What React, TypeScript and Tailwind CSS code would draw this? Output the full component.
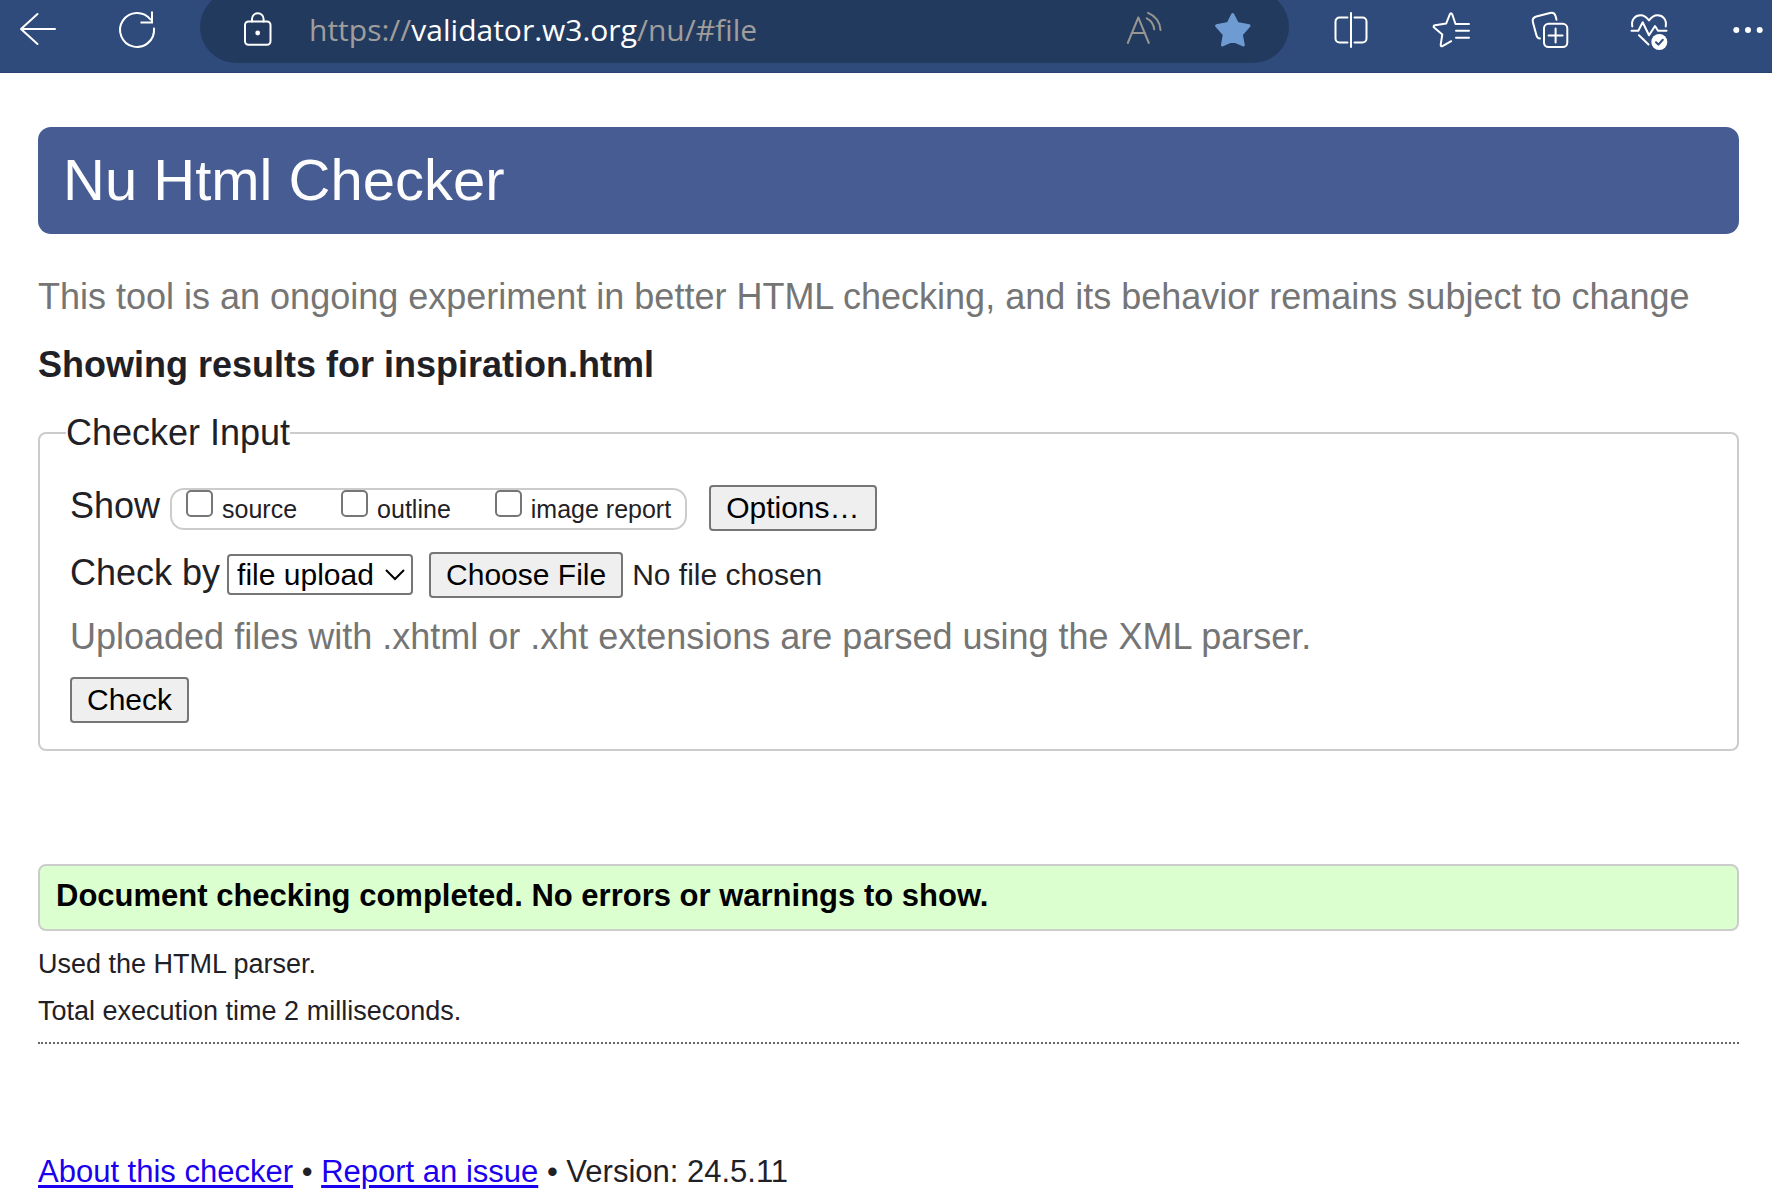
import React from "react";

type IconProps = { children: React.ReactNode; color?: string };

function Icon({ children, color = "#ffffff" }: IconProps) {
  return (
    <svg
      className="block size-9 overflow-visible"
      viewBox="0 0 36 36"
      fill="none"
      stroke={color}
      strokeWidth="2"
      strokeLinecap="round"
      strokeLinejoin="round"
      aria-hidden="true"
    >
      {children}
    </svg>
  );
}

function IconButton({ label, children, color }: IconProps & { label: string }) {
  return (
    <button type="button" aria-label={label} className="shrink-0">
      <Icon color={color}>{children}</Icon>
    </button>
  );
}

function BrowserBar() {
  return (
    <header className="flex h-[73px] items-start overflow-hidden border-b border-[#28436f] bg-[#2f4b7b]">
      <div className="mr-[45px] ml-5 flex gap-[63px] pt-[11px]">
        <IconButton label="Back">
          <path d="M17.500 3 1 18l16.500 15M1 18h34" />
        </IconButton>
        <IconButton label="Refresh">
          <path d="M35 17.500A17 17 0 1 1 31.500 8.500" />
          <path d="M33 1.500v10H22.500" strokeLinecap="square" strokeLinejoin="miter" />
        </IconButton>
      </div>
      <div className="-mt-[9px] flex h-[72px] min-w-0 flex-1 items-center rounded-full bg-[#233a5f] pt-1 pr-[38px] pl-10">
        <IconButton label="View site information">
          <rect x="5" y="10.500" width="25.500" height="23.300" rx="3.500" />
          <path d="M12 10.500V8a5.800 5.800 0 0 1 11.600 0v2.500" />
          <circle cx="17.700" cy="22" r="2.400" fill="#ffffff" stroke="none" />
        </IconButton>
        <div className="ml-[33px] min-w-0 flex-1 truncate font-['Open_Sans','Noto_Sans',sans-serif] text-[30px] text-[#a09e9c]">
          https://<span className="text-white">validator.w3.org</span>/nu/#file
        </div>
        <div className="flex gap-[53px]">
          <IconButton label="Read aloud" color="#96958f">
            <path d="M1.800 32 12.300 6.500 22.800 32M5.500 22h13.600" />
            <path d="M20.700 7.300c4.300 2.200 7.100 6.200 7.500 11M22 1.900c7.500 3.100 12 9.600 12.500 17.100" />
          </IconButton>
          <IconButton label="Edit favorite" color="#6f9bd3">
            <path
              d="M17.700 3.500 22.200 12.500 34 14.800 26.300 23.500 28.300 34 17.700 29.300 7.500 34 9.300 23.500 1.600 14.800 13.200 12.500Z"
              fill="#6f9bd3"
              strokeWidth="3"
            />
          </IconButton>
        </div>
      </div>
      <div className="mr-[7px] ml-11 flex gap-[63px] pt-[11px]">
        <IconButton label="Split screen">
          <path d="M14.500 6.500h-8a4 4 0 0 0-4 4v17a4 4 0 0 0 4 4h8M18 2v34M21.500 6.500h8a4 4 0 0 1 4 4v17a4 4 0 0 1-4 4h-8" />
        </IconButton>
        <IconButton label="Favorites">
          <path d="M37 13H23.500L20.200 3.300c-.6-1.300-1.800-1.300-2.400 0L14.200 12.500 3 14.300c-1.600.3-1.800 1.400-.9 2.300L10.300 23.500 8.700 33.700c-.1 1.400.7 1.900 1.800 1.400l8.700-4.900M24 19.800h13M24 26.800h13" />
        </IconButton>
        <IconButton label="Collections">
          <rect x="13" y="12.800" width="23.300" height="23.300" rx="4.500" />
          <path d="M24.600 17.500v14M17.600 24.500h14M25.500 8.700 24.700 5.500C23.900 2.600 21.800 1.300 19 2L5.300 5.500C2.500 6.300 1.200 8.500 1.900 11.300L5.500 24.500c.5 1.900 1.700 2.900 3.500 3" />
        </IconButton>
        <IconButton label="Browser essentials">
          <path d="M2.300 15.500C1 8.500 5 4.300 10.500 4.300c3.500 0 6.200 1.900 8.500 5.200 2.300-3.300 5-5.200 8.500-5.200 5.500 0 9.500 4.200 8.200 11.200" />
          <path d="M1.500 19.700h6.800l4.400-8.500L19 24.300l6-9.300 3 4.700h8.500M9 24.300l9.500 9.200" />
          <circle cx="29.300" cy="31" r="8" fill="#ffffff" stroke="none" />
          <path d="m26 31.200 2.400 2.400 4.400-4.800" stroke="#2f4b7b" />
        </IconButton>
        <IconButton label="Settings and more">
          <g fill="#ffffff" stroke="none">
            <circle cx="7.300" cy="19" r="3" />
            <circle cx="19" cy="19" r="3" />
            <circle cx="30.700" cy="19" r="3" />
          </g>
        </IconButton>
      </div>
    </header>
  );
}

function ShowOption({ id, label }: { id: string; label: string }) {
  return (
    <div className="flex items-baseline gap-[9px]">
      <input
        type="checkbox"
        id={id}
        className="size-[27px] shrink-0 appearance-none self-start rounded-[5px] border-2 border-[#767676] bg-white checked:bg-[#0075ff]"
      />
      <label htmlFor={id} className="text-[25px] leading-[38px]">
        {label}
      </label>
    </div>
  );
}

const buttonClass =
  "rounded-[4px] border-2 border-[#767676] bg-[#efefef] px-[15px] py-1 text-[30px] leading-[34px] text-black";

function CheckerForm() {
  return (
    <form onSubmit={(e) => e.preventDefault()}>
      <fieldset className="mt-6 rounded-lg border-2 border-[#cccccc] px-[26px] pb-[26px]">
        <legend className="text-4xl leading-[44px]">Checker Input</legend>
        <div className="pt-[30px] pl-1">
          <div className="flex flex-wrap items-baseline">
            <span className="mr-[10px] text-4xl leading-10">Show</span>
            <div
              role="group"
              aria-label="Show"
              className="mr-[22px] flex items-baseline gap-11 rounded-[14px] border-2 border-[#cccccc] px-[14px]"
            >
              <ShowOption id="source" label="source" />
              <ShowOption id="outline" label="outline" />
              <ShowOption id="imagereport" label="image report" />
            </div>
            <button type="button" className={buttonClass}>
              Options…
            </button>
          </div>
          <div className="mt-[21px] flex flex-wrap items-baseline">
            <label htmlFor="docselect" className="mr-[7px] text-4xl leading-10">
              Check by
            </label>
            <div className="relative mr-4">
              <select
                id="docselect"
                className="block h-[41px] appearance-none rounded-[4px] border-2 border-[#767676] bg-white pr-[37px] pl-2 text-[30px] leading-[37px] text-black"
              >
                <option>file upload</option>
              </select>
              <svg
                className="pointer-events-none absolute top-[15px] right-2 h-3 w-5"
                viewBox="0 0 20 12"
                fill="none"
                stroke="#000000"
                strokeWidth="2"
                aria-hidden="true"
              >
                <path d="m1 1 9 9 9-9" />
              </svg>
            </div>
            <input
              type="file"
              aria-label="File to check"
              className="w-[480px] text-[30px] leading-[34px] file:mr-[9px] file:rounded-[4px] file:border-2 file:border-solid file:border-[#767676] file:bg-[#efefef] file:px-[15px] file:py-1 file:text-[30px] file:leading-[34px] file:text-black"
            />
          </div>
          <p className="mt-[17px] text-4xl leading-[44px] text-[#757575]">
            Uploaded files with .xhtml or .xht extensions are parsed using the XML parser.
          </p>
          <button type="submit" className={`${buttonClass} mt-[18px] block`}>
            Check
          </button>
        </div>
      </fieldset>
    </form>
  );
}

export default function App() {
  return (
    <div className="min-h-screen bg-white font-['Liberation_Sans',Arial,sans-serif] text-[#1f2126]">
      <BrowserBar />
      <main className="pt-[54px] pr-[33px] pl-[38px]">
        <h1 className="rounded-[13px] bg-[#485c94] px-[25px] pt-[19px] pb-[21px] text-[58px] leading-[67px] text-[#fdfdfd]">
          Nu Html Checker
        </h1>
        <p className="mt-[41px] text-4xl leading-[44px] text-[#757575]">
          This tool is an ongoing experiment in better HTML checking, and its behavior remains subject to change
        </p>
        <h2 className="mt-6 text-4xl leading-[44px] font-bold">Showing results for inspiration.html</h2>
        <CheckerForm />
        <p className="mt-[113px] rounded-lg border-2 border-[#cccccc] bg-[#dcffcf] px-4 pt-3 pb-[15px] text-[31px] leading-9 font-bold text-black">
          Document checking completed. No errors or warnings to show.
        </p>
        <p className="mt-[17px] text-[27px] leading-8">Used the HTML parser.</p>
        <p className="mt-[15px] text-[27px] leading-8">Total execution time 2 milliseconds.</p>
        <hr className="mt-[15px] border-t-2 border-dotted border-[#666666]" />
      </main>
      <footer className="mt-[110px] pr-[33px] pl-[38px] text-[31px] leading-9">
        <a href="#about" className="text-[#1a00ee] underline decoration-[3px] underline-offset-[3px]">
          About this checker
        </a>{" "}
        •{" "}
        <a href="#issues" className="text-[#1a00ee] underline decoration-[3px] underline-offset-[3px]">
          Report an issue
        </a>{" "}
        • Version: 24.5.11
      </footer>
    </div>
  );
}
